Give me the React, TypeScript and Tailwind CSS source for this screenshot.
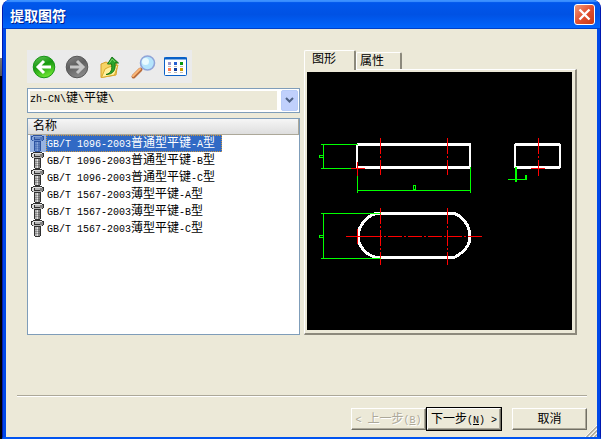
import { useState } from "react";
import type { ReactNode } from "react";

const parts = [
  "GB/T 1096-2003普通型平键-A型",
  "GB/T 1096-2003普通型平键-B型",
  "GB/T 1096-2003普通型平键-C型",
  "GB/T 1567-2003薄型平键-A型",
  "GB/T 1567-2003薄型平键-B型",
  "GB/T 1567-2003薄型平键-C型",
];

// Latin runs are set in a half-width face next to the full-width characters.
function Mixed({ text }: { text: string }) {
  return (
    <>
      {text.split(/([\x20-\x7e]+)/).map((run, i) =>
        i % 2 ? (
          <span key={i} className="font-['Liberation_Mono',monospace] text-[10px]">{run}</span>
        ) : (
          run
        )
      )}
    </>
  );
}

function ToolButton({ label, children }: { label: string; children: ReactNode }) {
  return (
    <button type="button" aria-label={label} className="flex h-8 w-[33px] items-center justify-center">
      {children}
    </button>
  );
}

function ArrowIcon({ back }: { back?: boolean }) {
  const id = back ? "ball-back" : "ball-forward";
  return (
    <svg width="24" height="24" viewBox="0 0 24 24">
      <defs>
        <linearGradient id={id} x1="0" y1="0" x2="0.4" y2="1">
          <stop offset="0" stopColor={back ? "#6cc860" : "#8a8a8a"} />
          <stop offset="0.5" stopColor={back ? "#189a10" : "#606060"} />
          <stop offset="1" stopColor={back ? "#68e030" : "#868686"} />
        </linearGradient>
      </defs>
      <circle cx="12" cy="12" r="10.800" fill={`url(#${id})`} stroke={back ? "#189418" : "#585858"} />
      <path
        d={back ? "M19 12H7M12 6l-6 6 6 6" : "M5 12h12M12 6l6 6-6 6"}
        fill="none"
        stroke={back ? "#fff" : "#c6c6c6"}
        strokeWidth="3"
      />
    </svg>
  );
}

function FolderUpIcon() {
  return (
    <svg width="22" height="24" viewBox="0 0 22 24">
      <path d="M2 9l5-2 2 1 8-1 1 6-1 7L2 22.500z" fill="#f6d464" stroke="#d8a028" />
      <path d="M2.500 22.500L6 14l4-2 9-2-3.500 10z" fill="#fff09c" stroke="#d9a92c" />
      <path d="M7 19.500c5-1 6.500-5 5.500-10.500H8.500L13 2l6.500 6H16c1 7-2 11.500-9 11.500z" fill="#2ca42c" stroke="#127012" strokeWidth="0.9" />
      <path d="M10 8.500L13.200 4l3 3" fill="none" stroke="#7cd86c" />
    </svg>
  );
}

function SearchIcon() {
  return (
    <svg width="26" height="26" viewBox="0 0 26 26">
      <path d="M10.500 15.500L3.500 22.500" stroke="#b86c3c" strokeWidth="4" strokeLinecap="round" />
      <path d="M10 15L3 22" stroke="#fcb878" strokeWidth="2" strokeLinecap="round" />
      <circle cx="17.500" cy="9" r="7" fill="#b4e4fc" stroke="#90a4d8" strokeWidth="1.600" />
      <circle cx="15.500" cy="7.500" r="3.500" fill="#e8faff" />
    </svg>
  );
}

function ViewIcon() {
  const cells = [
    ["#9894cc", 4, 5], ["#2860d0", 10, 5], ["#08980c", 16, 5],
    ["#ff7850", 4, 11], ["#103c9c", 10, 11], ["#cc9c00", 16, 11],
  ] as const;
  return (
    <svg width="23" height="19" viewBox="0 0 23 19">
      <rect x="0.500" y="0.500" width="22" height="18" rx="1" fill="#fff" stroke="#0860c8" />
      <path d="M0 1.500h23" stroke="#0860c8" strokeWidth="2" />
      {cells.map(([fill, x, y]) => (
        <g key={fill}>
          <rect x={x} y={y} width="3" height="3" fill={fill} />
          <rect x={x} y={y + 4} width="3" height="1" fill="#b8b8b8" />
        </g>
      ))}
    </svg>
  );
}

function BoltIcon({ selected }: { selected: boolean }) {
  const dark = selected ? "#2c52a0" : "#303030";
  const mid = selected ? "#5478bc" : "#848484";
  const soft = selected ? "#6488c8" : "#b4b4b4";
  const light = selected ? "#86a4d8" : "#e0e0e0";
  return (
    <svg width="16" height="17" viewBox="0 0 16 17" className={selected ? "bg-[#98b4e2]" : ""} shapeRendering="crispEdges">
      <path d="M3 0h9v1h2v4h-1v1h-2v10h-1v1H5v-1H4V6H2V5H1V1h2z" fill={dark} />
      <path d="M3 1h9v1H3zM2 2h2v3H2z" fill={light} />
      <path d="M5 2h5v2H5zM3 5h9v1H3z" fill={soft} />
      <path d="M10 2h3v3h-3z" fill={mid} />
      <path d="M5 7h2v9H5z" fill={soft} />
      <path d="M7 7h1v9H7z" fill={light} />
      <path d="M8 7h2v9H8z" fill={mid} />
      <path d="M5 9h5v1H5zM5 11h5v1H5zM5 13h5v1H5z" fill={dark} opacity="0.300" />
    </svg>
  );
}

function KeyDrawing() {
  return (
    <svg viewBox="307 72 265 258" className="block w-full" shapeRendering="crispEdges" fill="none">
      <g stroke="#fff" strokeWidth="3">
        <path d="M357 144.500h114M357 167.500h114M380 213.500h70M374 257.500h80M515 144.500h45M515 167.500h45" />
        <path d="M357 144v24M470 144v24M515 144v24M560 144v24" strokeWidth="2" />
        <path d="M380 213.500h-4c-8 2-18 12-18 23s10 19 18 21M450 213.500h4c8 2 16 12 16 23s-8 17-16 21" />
      </g>
      <g stroke="#f00">
        <path d="M380.500 138v16m0 2v2m0 2v15M447.500 138v16m0 2v2m0 2v15M538.500 138v16m0 2v2m0 2v16" />
        <path d="M380.500 208v16m0 2v2m0 2v16m0 2v2m0 2v13M447.500 208v16m0 2v2m0 2v16m0 2v2m0 2v13" />
        <path d="M346 236.500h36m2 0h2m2 0h14m2 0h2m2 0h14m2 0h2m2 0h14m2 0h2m2 0h14m2 0h2m2 0h14" />
        <path d="M351 168.500h14M357.500 162v14M357.500 229v15M531 168.500h14" />
      </g>
      <g stroke="#0f0">
        <path d="M321 144.500h37M321 168.500h30M323.500 144v24M357.500 176v17M470.500 167v26M357 190.500h114" />
        <path d="M321 213.500h60M321 258.500h60M323.500 213v45M319.500 155.500h4v2h-4zM319.500 235.500h4v2h-4zM413.500 185.500h2v4h-2z" />
        <path d="M508 179.500h19" />
        <path d="M516 167v15M526 175v5" strokeWidth="2" />
      </g>
    </svg>
  );
}

const raised =
  "h-[22px] border border-t-white border-l-white border-r-[#716f64] border-b-[#716f64] shadow-[inset_-1px_-1px_0_#aca899]";

export default function App() {
  const [selected, setSelected] = useState(0);
  const [tab, setTab] = useState(0);

  return (
    <div className="flex h-screen bg-[linear-gradient(#fff_58px,#777_58px,#555_76px,#000_76px)] pl-0.5 font-['Liberation_Sans','Noto_Sans_CJK_SC',sans-serif] text-xs text-black">
      <main className="flex min-w-0 flex-1 flex-col overflow-hidden rounded-t-lg border-x border-b-2 border-x-[#0019b0] border-b-[#0054f0] bg-[#0048e0]">
        <header className="flex h-[29px] shrink-0 items-center justify-between bg-linear-to-b from-[#0058ee] via-[#0052e4] to-[#0066ff] pr-[5px] pl-[7px] shadow-[inset_0_2px_1px_#3b91ff,inset_0_-1px_0_#0040c8]">
          <h1 className="font-['Noto_Sans_CJK_SC',sans-serif] text-[14px] leading-5 font-bold text-white [text-shadow:1px_1px_0_#00208c]">提取图符</h1>
          <button
            type="button"
            aria-label="关闭"
            className="flex size-[21px] items-center justify-center rounded-[3px] border border-white bg-linear-to-br from-[#f09878] via-[#e25030] to-[#c83810]"
          >
            <svg width="13" height="13" viewBox="0 0 13 13">
              <path d="M1.500 1.500l10 10m0-10l-10 10" stroke="#fff" strokeWidth="2.400" />
            </svg>
          </button>
        </header>

        <div className="relative flex flex-1 flex-col border-x-[3px] border-[#0048e8] bg-[#ece9d8]">
          <div className="flex pt-[21px] pr-5 pl-[21px]">
            <section className="flex w-[273px] flex-col">
              <div className="flex h-[33px] w-[165px] items-center bg-[#ebebeb]">
                <ToolButton label="后退"><ArrowIcon back /></ToolButton>
                <ToolButton label="前进"><ArrowIcon /></ToolButton>
                <ToolButton label="向上"><FolderUpIcon /></ToolButton>
                <ToolButton label="搜索"><SearchIcon /></ToolButton>
                <ToolButton label="查看"><ViewIcon /></ToolButton>
              </div>

              <div className="mt-[5px] flex h-[25px] justify-between border border-[#7f9db9] bg-white p-px">
                <div className="mt-px mb-px ml-px flex-1 bg-[#ece9d8] leading-[14px]">
                  <Mixed text="zh-CN\键\平键\" />
                </div>
                <button type="button" aria-label="展开" className="ml-1 flex w-[17px] items-center justify-center rounded-xs border border-[#b8ccf8] bg-[#c0d0fc]">
                  <svg width="9" height="7" viewBox="0 0 9 7">
                    <path d="M1 1l3.500 3.500L8 1" fill="none" stroke="#4d6185" strokeWidth="2" />
                  </svg>
                </button>
              </div>

              <table className="mt-[5px] flex h-[217px] flex-col border border-[#7f9db9] bg-white">
                <thead className="block border-r border-b border-[#aca899] bg-linear-to-b from-[#f6f6f6] to-[#dedede]">
                  <tr className="block">
                    <th className="block pl-[5px] text-left leading-[15px] font-normal">名称</th>
                  </tr>
                </thead>
                <tbody className="block pl-0.5">
                  {parts.map((name, i) => (
                    <tr key={name} className="block" onClick={() => setSelected(i)}>
                      <td className="flex h-[17px]">
                        <BoltIcon selected={i === selected} />
                        <span
                          className={`border border-dotted pr-1.5 leading-[15px] whitespace-nowrap ${
                            i === selected ? "border-[#ce953a] bg-[#316ac5] text-white" : "border-transparent"
                          }`}
                        >
                          <Mixed text={name} />
                        </span>
                      </td>
                    </tr>
                  ))}
                </tbody>
              </table>
            </section>

            <section className="ml-1 min-w-0 flex-1">
              <div role="tablist" className="flex items-end">
                {["图形", "属性"].map((name, i) => (
                  <button
                    key={name}
                    type="button"
                    role="tab"
                    aria-selected={tab === i}
                    onClick={() => setTab(i)}
                    className={`flex rounded-t-xs border-t border-r-2 border-l border-white border-r-[#8c897c] ${
                      tab === i
                        ? "z-10 -mb-px h-5 w-[52px] bg-[#ece9d8] pl-[7px] leading-4"
                        : "h-[17px] w-[46px] pl-[3px] leading-[17px]"
                    }`}
                  >
                    {name}
                  </button>
                ))}
              </div>
              <div className="border-t border-r-2 border-b-2 border-l border-t-white border-r-[#8c897c] border-b-[#8c897c] border-l-white pt-0.5 pr-[3px] pb-[3px] pl-0.5">
                <div className="bg-black">
                  <KeyDrawing />
                </div>
              </div>
            </section>
          </div>

          <footer className="mt-auto pr-2.5 pb-[7px] pl-[11px]">
            <div className="border-t border-b border-t-[#aca899] border-b-white" />
            <div className="mt-[11px] flex items-center justify-end">
              <button type="button" disabled className={`${raised} w-[75px] whitespace-nowrap text-[#aca899] [text-shadow:1px_1px_0_#fff]`}>
                <Mixed text="< 上一步(" /><u><Mixed text="B" /></u><Mixed text=")" />
              </button>
              <div className="-my-px flex border border-black">
                <button type="button" className={`${raised} w-[74px] whitespace-nowrap`}>
                  下一步<Mixed text="(" /><u><Mixed text="N" /></u><Mixed text=") >" />
                </button>
              </div>
              <button type="button" className={`${raised} ml-2.5 w-[75px]`}>取消</button>
            </div>
          </footer>

          {/* resize grip, over the footer's corner */}
          <svg width="12" height="12" viewBox="0 0 12 12" className="absolute right-0 bottom-0">
            <path d="M0 12L12 0M4 12l8-8M8 12l4-4" stroke="#fff" />
            <path d="M1.500 12L12 1.500M5.500 12L12 5.500M9.500 12L12 9.500" stroke="#aca899" strokeWidth="1.500" />
          </svg>
        </div>
      </main>
    </div>
  );
}
